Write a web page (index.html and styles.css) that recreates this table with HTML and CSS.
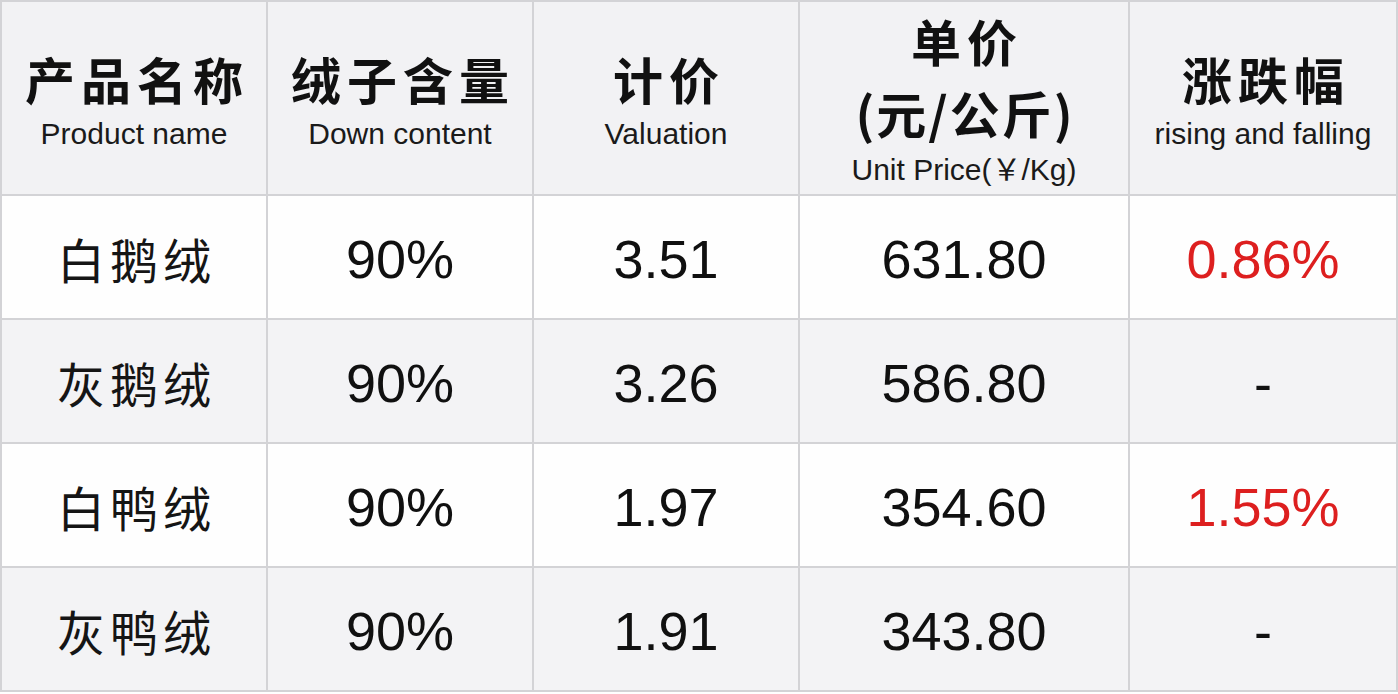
FILE: index.html
```html
<!DOCTYPE html>
<html lang="zh-CN">
<head>
<meta charset="utf-8">
<title>羽绒价格</title>
<link rel="stylesheet" href="styles.css">
</head>
<body>
<div class="table">
  <div class="cell head"><div class="zh">产品名称</div><div class="en">Product name</div></div>
  <div class="cell head"><div class="zh">绒子含量</div><div class="en">Down content</div></div>
  <div class="cell head"><div class="zh">计价</div><div class="en">Valuation</div></div>
  <div class="cell head tall"><div class="zh zh-a">单价</div><div class="zh zh-b">(元/公斤)</div><div class="en en-c">Unit Price(￥/Kg)</div></div>
  <div class="cell head"><div class="zh">涨跌幅</div><div class="en">rising and falling</div></div>

  <div class="cell light name">白鹅绒</div>
  <div class="cell light num">90%</div>
  <div class="cell light num">3.51</div>
  <div class="cell light num">631.80</div>
  <div class="cell light num up">0.86%</div>

  <div class="cell grey name">灰鹅绒</div>
  <div class="cell grey num">90%</div>
  <div class="cell grey num">3.26</div>
  <div class="cell grey num">586.80</div>
  <div class="cell grey num">-</div>

  <div class="cell light name">白鸭绒</div>
  <div class="cell light num">90%</div>
  <div class="cell light num">1.97</div>
  <div class="cell light num">354.60</div>
  <div class="cell light num up">1.55%</div>

  <div class="cell grey name">灰鸭绒</div>
  <div class="cell grey num">90%</div>
  <div class="cell grey num">1.91</div>
  <div class="cell grey num">343.80</div>
  <div class="cell grey num">-</div>
</div>
</body>
</html>
```

FILE: styles.css
```css
html, body {
  margin: 0;
  padding: 0;
  background: #ffffff;
}

.table {
  display: grid;
  grid-template-columns: 264px 264px 264px 328px 266px;
  grid-template-rows: 192px 122px 122px 122px 122px;
  gap: 2px;
  padding: 2px;
  width: 1398px;
  box-sizing: border-box;
  background: #d3d3d6;
  font-family: "Liberation Sans", Arial, "Noto Sans CJK SC", sans-serif;
  color: #141414;
}

.cell {
  display: flex;
  flex-direction: column;
  align-items: center;
  justify-content: center;
}

.head {
  background: #f2f2f4;
  padding-top: 3px;
  box-sizing: border-box;
}

.head .zh {
  font-family: "Noto Sans CJK SC", sans-serif;
  font-weight: 700;
  font-size: 50px;
  line-height: 60px;
  letter-spacing: 6px;
  margin-right: -6px;
  color: #111;
}

.head .en {
  font-size: 30px;
  line-height: 34px;
  margin-top: 9px;
  color: #1a1a1a;
}

.head.tall {
  justify-content: flex-start;
  padding-top: 8px;
}

.head .zh-a {
  line-height: 60px;
}

.head .zh-b {
  line-height: 60px;
  margin-top: 12px;
  letter-spacing: 2px;
  margin-right: -2px;
}

.head .en-c {
  margin-top: 11px;
}

.light {
  background: #fefefe;
}

.grey {
  background: #f3f3f5;
}

.name {
  font-family: "Noto Sans CJK SC", sans-serif;
  font-weight: 400;
  font-size: 48px;
  letter-spacing: 5px;
  padding-left: 5px;
  padding-top: 2px;
  box-sizing: border-box;
  color: #151515;
}

.num {
  font-size: 54px;
  padding-top: 4px;
  box-sizing: border-box;
  color: #101010;
}

.up {
  color: #dd1f1f;
}
```
